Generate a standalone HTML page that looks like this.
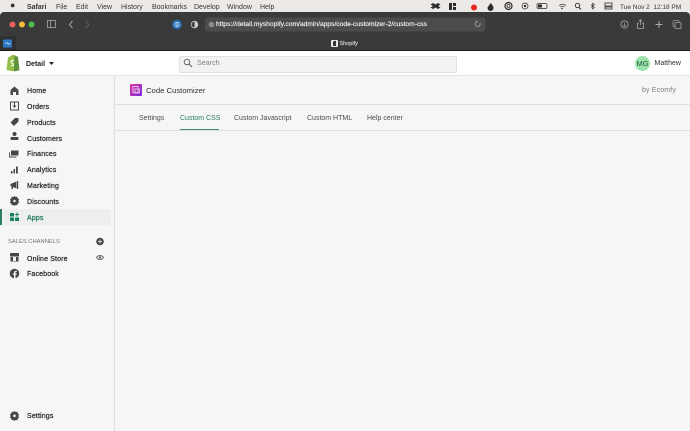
<!DOCTYPE html>
<html><head><meta charset="utf-8">
<style>
html,body{margin:0;padding:0;width:690px;height:431px;overflow:hidden;background:#f6f6f7;font-family:"Liberation Sans",sans-serif;}
.a{position:absolute;white-space:nowrap;}
svg{position:absolute;overflow:visible;}
.m{font-size:7px;color:#3a3632;top:2.500px;line-height:9px;}
.n{left:27px;font-size:7px;color:#202223;line-height:10px;-webkit-text-stroke:.2px currentColor;letter-spacing:.15px;}
.t{top:114px;font-size:7px;color:#4a4d50;line-height:10px;}
</style></head><body>
<div class="a" style="left:0;top:0;width:690px;height:12px;background:#ece9e6;"></div>
<div class="a" style="left:0;top:12px;width:690px;height:38px;background:#3a3a3a;border-radius:4px 4px 0 0;"></div>
<div class="a" style="left:0;top:36px;width:16px;height:14px;background:#303030;"></div>
<div class="a" style="left:0;top:49.500px;width:690px;height:1px;background:#1a1a1a;"></div>

<div class="a m" style="left:10px;font-size:9px;top:1px;">●</div>
<div class="a m" style="left:27px;font-weight:bold;">Safari</div>
<div class="a m" style="left:56px;">File</div>
<div class="a m" style="left:76px;">Edit</div>
<div class="a m" style="left:97px;">View</div>
<div class="a m" style="left:121px;">History</div>
<div class="a m" style="left:152px;">Bookmarks</div>
<div class="a m" style="left:194px;">Develop</div>
<div class="a m" style="left:227px;">Window</div>
<div class="a m" style="left:260px;">Help</div>
<div class="a m" style="left:620px;font-size:6.500px;">Tue Nov 2&nbsp; 12:18 PM</div>

<svg style="left:0;top:0" width="690" height="50" viewBox="0 0 690 50">
<g fill="#2c2c2c">
<path d="M433 3l2.500 1.500 2.500-1.500 2.500 1.500-2.500 1.500 2.500 1.500-2.500 1.500-2.500-1.500-2.500 1.500-2.500-1.500 2.500-1.500-2.500-1.500z"/>
<rect x="449" y="3" width="3" height="7"/><rect x="453" y="3" width="3" height="3"/><rect x="453" y="7" width="3" height="3"/>
<circle cx="474" cy="7.500" r="3" fill="#e8261f"/>
<path d="M490.500 3c2 2 3 3.500 3 5a3 3 0 0 1-6 0c0-1.500 2-2.500 3-5z"/>
</g>
<g fill="none" stroke="#2c2c2c">
<circle cx="508.500" cy="6" r="3.500" stroke-width="1.200"/><circle cx="508.500" cy="6" r="1.500" stroke-width=".8"/>
<circle cx="525" cy="6" r="3" stroke-width=".7"/><rect x="537" y="3.500" width="10" height="5" rx="1.500" stroke-width=".7"/>
<path d="M558.500 5.500a5.500 5.500 0 0 1 7 0M560 7a3 3 0 0 1 4 0" stroke-width=".8" transform="translate(.5 0)"/>
<circle cx="577.500" cy="5.500" r="2.200" stroke-width=".9"/><path d="M579 7.500l2 2" stroke-width=".9"/>
<path d="M592.500 3v6l2-1.500-3.500-3M592.500 3l2 1.500-3.500 3" stroke-width=".6"/>
<rect x="605" y="3" width="7" height="3" stroke-width=".8"/><rect x="605" y="7" width="7" height="2" stroke-width=".8"/>
</g>
<rect x="538" y="4.500" width="4" height="3" fill="#2c2c2c"/><circle cx="525" cy="6" r="1.200" fill="#2c2c2c"/>
<path d="M562 9.500l-1-1.200a1.500 1.500 0 0 1 2 0z" fill="#2c2c2c"/>

<circle cx="12.500" cy="24.500" r="3" fill="#f0605a"/><circle cx="22" cy="24.500" r="3" fill="#f5bb3c"/><circle cx="31.500" cy="24.500" r="3" fill="#4fbf4c"/>
<rect x="47.500" y="20.500" width="8" height="7" fill="none" stroke="#a8a8a8" stroke-width=".8"/><path d="M50.500 20.500v7" stroke="#a8a8a8" stroke-width=".8"/>
<path d="M72.500 21l-3 3.500 3 3.500" fill="none" stroke="#a5a5a5" stroke-width="1"/>
<path d="M86 21l3 3.500-3 3.500" fill="none" stroke="#5e5e5e" stroke-width="1"/>
<circle cx="177" cy="24.500" r="4.800" fill="#2a6fb8"/><circle cx="177" cy="24.500" r="2.200" fill="none" stroke="#bcd4ee" stroke-width=".8"/><rect x="176.600" y="22.500" width=".8" height="4" fill="#e8eef5"/>
<circle cx="194.500" cy="24.500" r="3.300" fill="none" stroke="#ccc" stroke-width=".8"/><path d="M194.500 21.200a3.300 3.300 0 0 1 0 6.600z" fill="#ccc"/>
<rect x="205" y="17.500" width="280.500" height="14" rx="3" fill="#4c4c4c"/>
<circle cx="211.500" cy="24.500" r="2.800" fill="#8a8a8a"/>
<path d="M481 23a2.500 2.500 0 1 1-2.500-1.500" transform="translate(-1 0)" fill="none" stroke="#bbb" stroke-width=".7"/><path d="M476.500 20.500l1.500 1-1.500 1z" fill="#bbb"/>
<circle cx="624.500" cy="24.500" r="3.600" fill="none" stroke="#aaa" stroke-width=".8"/><path d="M624.500 22.500v3.500M623 25l1.500 1.500 1.500-1.500" fill="none" stroke="#aaa" stroke-width=".6"/>
<path d="M639 23h-1.500v5.500h6V23H642M640.500 25v-5M639 21.200l1.500-1.500 1.500 1.500" fill="none" stroke="#aaa" stroke-width=".8"/>
<path d="M659 21v7M655.500 24.500h7" fill="none" stroke="#aaa" stroke-width="1"/>
<rect x="673" y="20.500" width="6" height="6" rx="1" fill="none" stroke="#999" stroke-width=".8"/><rect x="675" y="22.500" width="6" height="6" rx="1" fill="#3a3a3a" stroke="#aaa" stroke-width=".8"/>
<rect x="3" y="39.500" width="9" height="8" rx="1" fill="#2f78c4"/><path d="M5 43.500h1.500l1-1 1 2 1-1H11" fill="none" stroke="#d5e5f5" stroke-width=".6"/>
<rect x="331" y="40" width="7" height="7" rx="1" fill="#e8e8e8"/><path d="M333 46v-3.500c0-1.500 1.500-2 3-1.500v5z" fill="#333"/>
</svg>
<div class="a" style="left:216px;top:20px;font-size:6.700px;line-height:9px;color:#e8e8e8;-webkit-text-stroke:.2px #e8e8e8;">https://detail.myshopify.com/admin/apps/code-customizer-2/custom-css</div>
<div class="a" style="left:339.500px;top:39.500px;font-size:5.500px;line-height:8px;color:#d8d8d8;-webkit-text-stroke:.15px #d8d8d8;">Shopify</div>

<div class="a" style="left:0;top:50.500px;width:690px;height:25px;background:#fff;"></div>
<div class="a" style="left:0;top:75px;width:690px;height:1px;background:#e3e3e3;"></div>
<svg style="left:0;top:50px" width="60" height="25" viewBox="0 0 60 25">
<path d="M8 7.500l3-1.500c1-1.500 3.500-1.500 5 0l1 .5 1.500 13.500-6 1.300-6-1.300z" fill="#95bf47"/>
<path d="M14.500 6l3.500.8 1.500 13.500-5.500 1.200z" fill="#5e8e3e"/>
<path d="M14 10.500c-1-.5-3-.3-3 1.200 0 1.500 2.500 1.700 2.500 3.200 0 1-1.500 1.200-2.800.4" fill="none" stroke="#fff" stroke-width="1"/>
<path d="M49 12h5l-2.500 3z" fill="#202223"/>
</svg>
<div class="a" style="left:26px;top:59.500px;font-size:7px;line-height:10px;font-weight:bold;color:#202223;">Detail</div>
<div class="a" style="left:179px;top:55.500px;width:278px;height:17px;background:#f2f2f3;border:.5px solid #e1e1e3;border-radius:2px;box-sizing:border-box;"></div>
<svg style="left:183px;top:58px" width="10" height="10" viewBox="0 0 10 10"><circle cx="4" cy="4" r="2.800" fill="none" stroke="#555" stroke-width=".9"/><path d="M6 6l3 3" stroke="#555" stroke-width=".9"/></svg>
<div class="a" style="left:197px;top:59px;font-size:7px;line-height:10px;color:#7c7f83;letter-spacing:.1px;">Search</div>
<div class="a" style="left:635px;top:56px;width:15px;height:15px;border-radius:50%;background:#9ee3ae;color:#1f5a38;font-size:7.500px;line-height:15px;text-align:center;">MG</div>
<div class="a" style="left:654.500px;top:59px;font-size:7px;line-height:10px;color:#303133;">Matthew</div>

<div class="a" style="left:114px;top:76px;width:1px;height:355px;background:#dfe1e3;"></div>
<div class="a" style="left:115px;top:104px;width:575px;height:1px;background:#dfe0e1;"></div>
<div class="a" style="left:115px;top:129.500px;width:575px;height:1px;background:#dfe0e1;"></div>

<div class="a" style="left:3px;top:209px;width:108px;height:16px;background:#edeeef;border-radius:2px;"></div>
<div class="a" style="left:0;top:209px;width:1.500px;height:16px;background:#2a7d5f;"></div>

<div class="a n" style="top:86.500px;">Home</div>
<div class="a n" style="top:102.500px;">Orders</div>
<div class="a n" style="top:118.500px;">Products</div>
<div class="a n" style="top:134.500px;">Customers</div>
<div class="a n" style="top:150px;">Finances</div>
<div class="a n" style="top:166px;">Analytics</div>
<div class="a n" style="top:181.500px;">Marketing</div>
<div class="a n" style="top:197.500px;">Discounts</div>
<div class="a n" style="top:213.500px;color:#14734f;">Apps</div>
<div class="a" style="left:8px;top:237.500px;font-size:5.800px;line-height:8px;color:#6d7175;">SALES CHANNELS</div>
<div class="a n" style="top:254.500px;">Online Store</div>
<div class="a n" style="top:270px;">Facebook</div>
<div class="a n" style="top:412px;">Settings</div>

<svg style="left:0;top:76px" width="115" height="355" viewBox="0 0 115 355">
<g fill="#45484b">
<path d="M10.500 19v-5l4-3.500 4 3.500v5h-2.500v-3h-3v3z"/>
<path d="M10.500 26h8v8h-8z" fill="none" stroke="#45484b" stroke-width="1"/><path d="M14 26.500h1v3h1.500L14.500 32l-2-2.500H14z"/>
<path d="M10.500 46.500l4.500-4.500h3.500v3.500l-4.500 4.500z"/>
<circle cx="14.500" cy="58" r="2"/><rect x="10.500" y="61" width="8" height="3" rx="1"/>
<g transform="translate(0 1.500)"><rect x="11" y="73" width="7.500" height="5"/><path d="M9.500 75v4.500h7" fill="none" stroke="#45484b" stroke-width=".9"/></g>
<g transform="translate(0 2)"><rect x="11" y="93" width="1.500" height="2.500"/><rect x="13.500" y="91" width="1.500" height="4.500"/><rect x="16" y="88.500" width="1.800" height="7"/></g>
<g transform="translate(0 4)"><path d="M10.500 104l6-2.500v7l-6-2.500z"/><rect x="17" y="101" width="1.200" height="8"/><rect x="11.500" y="106" width="1.500" height="3"/></g>
<path d="M14.500 120l1.200 1 1.600-.2.400 1.600 1.300.9-.6 1.700.6 1.700-1.300.9-.4 1.600-1.600-.2-1.200 1-1.200-1-1.600.2-.4-1.600-1.300-.9.6-1.700-.6-1.700 1.300-.9.4-1.600 1.600.2z"/>
<rect x="10" y="177" width="9" height="3.500" rx=".8"/><path d="M10.500 181h2.500v4h3v-4h2.500v4.500h-8z"/>
<circle cx="14.500" cy="197.500" r="4.800"/>
<path d="M14.500 335l1.200 1 1.600-.2.400 1.600 1.300.9-.6 1.700.6 1.700-1.300.9-.4 1.600-1.600-.2-1.200 1-1.200-1-1.600.2-.4-1.600-1.300-.9.6-1.700-.6-1.700 1.300-.9.4-1.600 1.600.2z"/>
<circle cx="100" cy="165.500" r="3.800"/>
</g>
<circle cx="14.500" cy="125" r="1.200" fill="#f6f6f7"/>
<circle cx="14.500" cy="339.800" r="1.300" fill="#f6f6f7"/>
<path d="M15.500 202.300v-3.500h1.200l.2-1.300h-1.400v-.9c0-.5.300-.7.700-.7h.7v-1.200h-1.100c-1.100 0-1.800.7-1.800 1.800v1h-1.200v1.300H14v3.500z" fill="#f6f6f7"/>
<path d="M98 165.500h4M100 163.500v4" stroke="#f6f6f7" stroke-width=".8"/>
<path d="M96.500 181.500c1.800-2.800 5.200-2.800 7 0-1.800 2.800-5.200 2.800-7 0z" fill="none" stroke="#5c5f62" stroke-width=".9"/><circle cx="100" cy="181.500" r="1.200" fill="#5c5f62"/>
<g fill="#14805e">
<rect x="10" y="137" width="4" height="3.500"/><rect x="10" y="141.500" width="4" height="3.500"/><rect x="15" y="141.500" width="4" height="3.500"/>
<path d="M16.500 136.500h1v1.500h1.500v1h-1.500v1.500h-1V139H15v-1h1.500z"/>
</g>
</svg>

<svg style="left:130px;top:84px" width="12" height="12" viewBox="0 0 12 12"><defs><linearGradient id="g" x1="0" y1="0" x2="1" y2="1"><stop offset="0" stop-color="#e0399f"/><stop offset="1" stop-color="#7a2be0"/></linearGradient></defs><rect width="12" height="12" rx="1" fill="url(#g)"/><rect x="3" y="2.500" width="5" height="6" fill="none" stroke="#f3c9ee" stroke-width=".9"/><rect x="5" y="5" width="4.500" height="4" fill="none" stroke="#f3c9ee" stroke-width=".8"/></svg>
<div class="a" style="left:146px;top:85px;font-size:7.700px;line-height:12px;color:#303234;">Code Customizer</div>
<div class="a" style="left:642px;top:86px;font-size:7px;line-height:10px;color:#7d8084;letter-spacing:.15px;">by Ecomfy</div>

<div class="a t" style="left:139px;">Settings</div>
<div class="a t" style="left:180px;color:#2a7d63;">Custom CSS</div>
<div class="a t" style="left:234px;">Custom Javascript</div>
<div class="a t" style="left:307px;">Custom HTML</div>
<div class="a t" style="left:367px;">Help center</div>
<div class="a" style="left:180px;top:128.500px;width:39px;height:1.500px;background:#3f8a70;"></div>
</body></html>
